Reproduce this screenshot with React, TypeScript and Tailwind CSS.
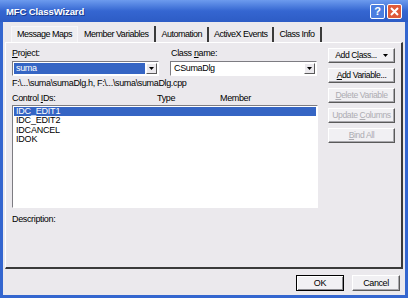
const font = { fontFamily: '"Liberation Sans", Arial, sans-serif' };

const tabs = ["Message Maps", "Member Variables", "Automation", "ActiveX Events", "Class Info"];

const items = ["IDC_EDIT1", "IDC_EDIT2", "IDCANCEL", "IDOK"];

function Bevel({ children, disabled = false, className = "" }: { children: React.ReactNode; disabled?: boolean; className?: string }) {
  return (
    <div
      className={`flex h-[15px] items-center justify-center whitespace-pre border border-t-white border-l-white border-r-[#5a5a5a] border-b-[#5a5a5a] bg-[#f1f0f3] text-[8.6px] tracking-[-0.4px] shadow-[inset_-1px_-1px_0_#a9a8ad] ${
        disabled ? "text-[#adacb2]" : "text-black"
      } ${className}`}
    >
      {children}
    </div>
  );
}

function Combo({ value, selected = false }: { value: string; selected?: boolean }) {
  return (
    <div className="flex h-[15px] w-[147px] items-center border border-t-[#7d7c82] border-l-[#7d7c82] border-r-white border-b-white bg-white p-[1px]">
      <div className={`flex h-full flex-1 items-center pl-[2px] ${selected ? "bg-[#3565c4] text-white" : "text-black"}`}>
        {value}
      </div>
      <div className="ml-[1px] flex h-full w-[11px] items-center justify-center border border-t-white border-l-white border-r-[#5a5a5a] border-b-[#5a5a5a] bg-[#ebe9ed]">
        <svg width="5" height="3" viewBox="0 0 5 3">
          <path d="M0 0h5L2.5 3z" fill="#000" />
        </svg>
      </div>
    </div>
  );
}

export default function App() {
  return (
    <div
      className="flex h-[298px] w-[408px] flex-col bg-[#3466cf] px-[3px] pb-[3px] text-[9px] leading-[11px] tracking-[-0.35px] text-black"
      style={font}
    >
      {/* title bar */}
      <div className="-mx-[3px] flex h-[22px] items-center justify-between bg-gradient-to-b from-[#6d9bee] via-[#3566d1] to-[#2d5cc5] px-[6px]">
        <span className="text-[9.5px] font-bold tracking-[-0.1px] text-white [text-shadow:1px_1px_0_#1b3a8a]">MFC ClassWizard</span>
        <div className="flex gap-[2px] pt-[1px]">
          <div className="flex h-[15px] w-[15px] items-center justify-center rounded-[2px] border border-white bg-[#4a7de0] text-[11px] font-bold tracking-[0px] text-white">
            ?
          </div>
          <div className="flex h-[15px] w-[15px] items-center justify-center rounded-[2px] border border-white bg-[#df5a39]">
            <svg width="9" height="9" viewBox="0 0 9 9">
              <path d="M1 1l7 7M8 1L1 8" stroke="#fff" strokeWidth="2" />
            </svg>
          </div>
        </div>
      </div>

      {/* body */}
      <div className="flex flex-1 flex-col bg-[#ebe9ed] pl-[2px] pr-[2px]">
        {/* tabs */}
        <div className="mt-[4px] flex h-[16px] items-end pl-[6px] tracking-[-0.5px]">
          {tabs.map((t, i) => (
            <div
              key={t}
              className={`flex items-center justify-center ${
                i === 0
                  ? "h-[16px] border border-b-0 border-[#f7f6f9] bg-[#efeef1] px-[5px]"
                  : i === 1
                  ? "h-[16px] border-r-2 border-r-[#3a3a3a] px-[6px]"
                  : "h-[15px] border-r-2 border-r-[#3a3a3a] px-[5px]"
              }`}
            >
              {t}
            </div>
          ))}
        </div>

        {/* panel */}
        <div className="flex h-[227px] border border-t-white border-l-white border-r-2 border-b-2 border-r-[#3a3a3a] border-b-[#3a3a3a] pl-[6px]">
          <div className="flex w-[306px] flex-col">
            <div className="mt-[5px] flex">
              <span className="w-[159px]">
                <u>P</u>roject:
              </span>
              <span>
                Class <u>n</u>ame:
              </span>
            </div>
            <div className="mt-[2px] flex gap-[11px]">
              <Combo value="suma" selected />
              <Combo value="CSumaDlg" />
            </div>
            <div className="mt-[2px]">F:\...\suma\sumaDlg.h, F:\...\suma\sumaDlg.cpp</div>
            <div className="mt-[4px] flex">
              <span className="w-[145px]">
                Control <u>I</u>Ds:
              </span>
              <span className="w-[63px]">Type</span>
              <span>Member</span>
            </div>
            <div className="mt-[1px] h-[103px] border border-t-[#7d7c82] border-l-[#7d7c82] border-r-white border-b-white bg-white p-[1px]">
              {items.map((it, i) => (
                <div
                  key={it}
                  className={`h-[9.3px] pl-[2px] leading-[9.3px] tracking-[-0.2px] ${
                    i === 0 ? "bg-[#3565c4] text-white" : "text-black"
                  }`}
                >
                  {it}
                </div>
              ))}
            </div>
            <div className="mt-[6px]">Description:</div>
          </div>

          <div className="ml-[10px] mt-[5px] flex w-[67px] flex-col gap-[5px]">
            <Bevel>
              Add C<u>l</u>ass...
              <svg className="ml-[6px]" width="5" height="3" viewBox="0 0 5 3">
                <path d="M0 0h5L2.5 3z" fill="#000" />
              </svg>
            </Bevel>
            <Bevel>
              <u>A</u>dd Variable...
            </Bevel>
            <Bevel disabled>
              <u>D</u>elete Variable
            </Bevel>
            <Bevel disabled>
              {"Update "}
              <u>C</u>olumns
            </Bevel>
            <Bevel disabled>
              <u>B</u>ind All
            </Bevel>
          </div>
        </div>

        {/* footer */}
        <div className="mt-[6px] flex justify-end gap-[8px] pr-[3px]">
          <div className="flex h-[16px] w-[48px] items-center justify-center border border-black bg-[#f1f0f3] shadow-[inset_1px_1px_0_#fff,inset_-1px_-1px_0_#8a898e]">
            OK
          </div>
          <Bevel className="h-[16px] w-[48px] text-[9px]">Cancel</Bevel>
        </div>
      </div>
    </div>
  );
}
